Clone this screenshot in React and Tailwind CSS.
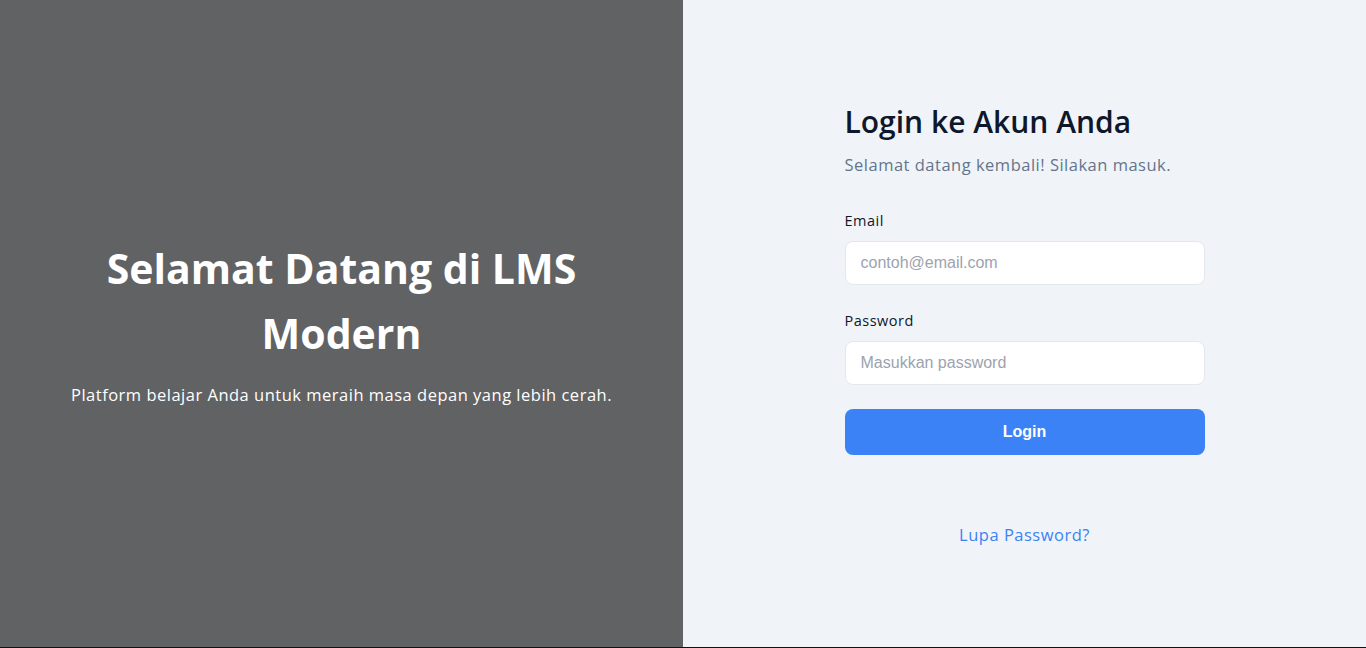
export default function App() {
  return (
    <div className="h-[648px] bg-[#111111]">
      <div className="h-[647px] flex font-['Open_Sans',sans-serif]">
        <div className="w-1/2 bg-[#616264] flex flex-col items-center justify-center px-10 pb-[4px] text-center text-white">
          <h1 className="text-[41px] leading-[65px] font-bold w-[560px]">Selamat Datang di LMS Modern</h1>
          <p className="mt-[17px] text-[16.5px] leading-6 tracking-[0.5px]">Platform belajar Anda untuk meraih masa depan yang lebih cerah.</p>
        </div>
        <div className="w-1/2 bg-[#f0f4f9] flex items-center justify-center">
          <div className="w-[360px] pt-[1px]">
            <h2 className="text-[30px] leading-[40px] font-semibold text-[#0f172a]">Login ke Akun Anda</h2>
            <p className="mt-[11px] text-[16.5px] leading-6 tracking-[0.5px] text-[#64748b]">Selamat datang kembali! Silakan masuk.</p>
            <form className="mt-[34px]" onSubmit={(e) => e.preventDefault()}>
              <label className="block text-[14.5px] leading-5 font-medium tracking-[0.5px] text-[#0f172a]">Email</label>
              <input
                type="email"
                placeholder="contoh@email.com"
                className="mt-[10px] w-full h-[44px] px-[15px] rounded-lg border border-[#e2e8f0] bg-white text-[16px] font-['Liberation_Sans',Arial,sans-serif] placeholder:text-[#9ca3af] outline-none"
              />
              <label className="block mt-[26px] text-[14.5px] leading-5 font-medium tracking-[0.5px] text-[#0f172a]">Password</label>
              <input
                type="password"
                placeholder="Masukkan password"
                className="mt-[10px] w-full h-[44px] px-[15px] rounded-lg border border-[#e2e8f0] bg-white text-[16px] font-['Liberation_Sans',Arial,sans-serif] placeholder:text-[#9ca3af] outline-none"
              />
              <button
                type="submit"
                className="mt-[24px] w-full h-[46px] rounded-lg bg-[#3b82f6] text-white text-[16px] font-bold font-['Liberation_Sans',Arial,sans-serif]"
              >
                Login
              </button>
            </form>
            <div className="mt-[68px] text-center">
              <a href="#" className="text-[16.5px] leading-6 tracking-[0.5px] text-[#3b82f6]">Lupa Password?</a>
            </div>
          </div>
        </div>
      </div>
    </div>
  );
}
